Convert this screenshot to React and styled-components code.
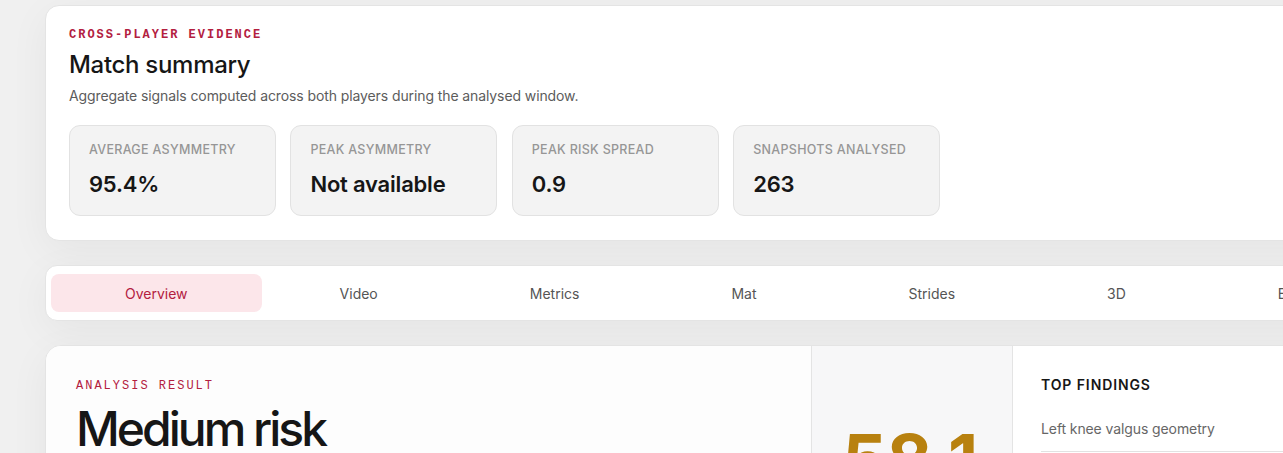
import React from "react";
import styled, { createGlobalStyle } from "styled-components";

const Global = createGlobalStyle`
  html, body {
    margin: 0;
    background: #f0f0f0;
    overflow: hidden;
  }
  body {
    font-family: Inter, "Noto Sans", sans-serif;
    color: #161616;
  }
`;

const Page = styled.div`
  width: 1440px;
  padding: 5px 0 0 45px;
  display: flex;
  flex-direction: column;
  gap: 24px;
`;

const Card = styled.section`
  background: #fff;
  border: 1px solid #e4e4e4;
  border-radius: 14px;
  box-shadow: 0 10px 40px rgba(0, 0, 0, 0.05);
`;

const SummaryCard = styled(Card)`
  padding: 22px 23px 24px;
`;

const Eyebrow = styled.div`
  font-family: "Liberation Mono", "DejaVu Sans Mono", monospace;
  font-size: 12px;
  font-weight: ${(p) => (p.$bold ? 700 : 400)};
  letter-spacing: 2px;
  color: #b3203f;
  text-transform: uppercase;
`;

const Title = styled.h2`
  margin: 8px 0 0;
  font-size: 24px;
  font-weight: 500;
  letter-spacing: -0.3px;
  line-height: 30px;
`;

const Sub = styled.p`
  margin: 7px 0 0;
  font-size: 14px;
  color: #5c5c5c;
  letter-spacing: -0.1px;
`;

const Stats = styled.div`
  display: flex;
  gap: 14.4px;
  margin-top: 21px;
`;

const Stat = styled.div`
  width: 207px;
  height: 91px;
  box-sizing: border-box;
  padding: 16px 19px;
  background: #f3f3f3;
  border: 1px solid #e2e2e2;
  border-radius: 11px;
`;

const StatLabel = styled.div`
  font-size: 12.5px;
  font-weight: 500;
  letter-spacing: 0.3px;
  color: #969696;
  text-transform: uppercase;
`;

const StatValue = styled.div`
  margin-top: 14px;
  font-size: 22px;
  font-weight: 600;
  color: #161616;
  letter-spacing: -0.2px;
`;

const TabBar = styled(Card)`
  display: flex;
  gap: 4px;
  padding: 8px 5px;
  border-radius: 12px;
`;

const Tab = styled.button`
  flex: none;
  height: 38px;
  padding: 0 74px;
  border: none;
  border-radius: 8px;
  font-family: inherit;
  font-size: 14px;
  color: ${(p) => (p.$active ? "#b3203f" : "#555")};
  background: ${(p) => (p.$active ? "#fce6ea" : "transparent")};
`;

const ResultCard = styled(Card)`
  display: grid;
  grid-template-columns: 765px 202px 1fr;
  height: 200px;
  overflow: hidden;
  border-radius: 16px;
`;

const ResultMain = styled.div`
  padding: 33px 30px;
  background: #fdfdfd;
`;

const RiskTitle = styled.h1`
  margin: 12px 0 0;
  font-size: 48px;
  font-weight: 500;
  letter-spacing: -3px;
  line-height: 1;
`;

const ScoreCol = styled.div`
  background: #f7f7f8;
  border-left: 1px solid #e4e4e4;
  border-right: 1px solid #e4e4e4;
  padding: 79px 0 0 30px;
`;

const Score = styled.div`
  font-size: 70px;
  font-weight: 700;
  color: #b8810f;
  line-height: 1;
  letter-spacing: 0;
`;

const Findings = styled.div`
  padding: 30px 28px;
`;

const FindingsHead = styled.div`
  font-size: 14px;
  font-weight: 600;
  letter-spacing: 0.9px;
  text-transform: uppercase;
`;

const Finding = styled.div`
  margin-top: 27px;
  padding-bottom: 14px;
  font-size: 14px;
  color: #666;
  border-bottom: 1px solid #e2e2e2;
  letter-spacing: -0.1px;
`;

const stats = [
  ["Average asymmetry", "95.4%"],
  ["Peak asymmetry", "Not available"],
  ["Peak risk spread", "0.9"],
  ["Snapshots analysed", "263"],
];

const tabs = ["Overview", "Video", "Metrics", "Mat", "Strides", "3D", "Evidence"];

export default function App() {
  return (
    <>
      <Global />
      <Page>
        <SummaryCard>
          <Eyebrow $bold>Cross-player evidence</Eyebrow>
          <Title>Match summary</Title>
          <Sub>Aggregate signals computed across both players during the analysed window.</Sub>
          <Stats>
            {stats.map(([label, value]) => (
              <Stat key={label}>
                <StatLabel>{label}</StatLabel>
                <StatValue>{value}</StatValue>
              </Stat>
            ))}
          </Stats>
        </SummaryCard>

        <TabBar>
          {tabs.map((t, i) => (
            <Tab key={t} $active={i === 0}>{t}</Tab>
          ))}
        </TabBar>

        <ResultCard>
          <ResultMain>
            <Eyebrow>Analysis result</Eyebrow>
            <RiskTitle>Medium risk</RiskTitle>
          </ResultMain>
          <ScoreCol>
            <Score>58.1</Score>
          </ScoreCol>
          <Findings>
            <FindingsHead>Top findings</FindingsHead>
            <Finding>Left knee valgus geometry</Finding>
          </Findings>
        </ResultCard>
      </Page>
    </>
  );
}
